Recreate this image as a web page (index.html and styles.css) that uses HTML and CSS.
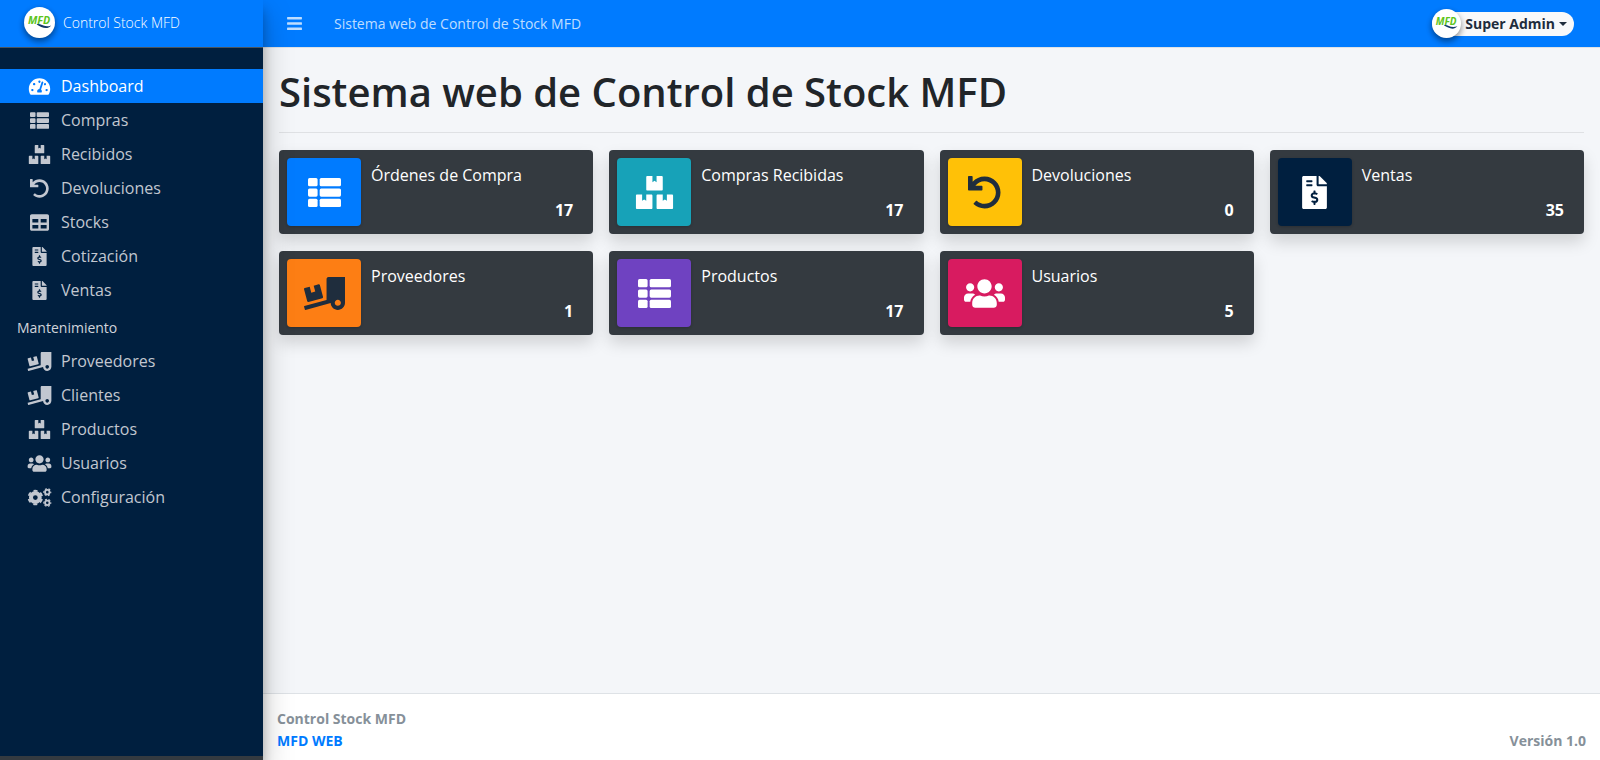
FILE: index.html
```
<!DOCTYPE html>
<html lang="es">
<head>
    <meta charset="UTF-8">
    <meta name="viewport" content="width=device-width, initial-scale=1">
    <title>Sistema web de Control de Stock MFD</title>
    <link rel="stylesheet" href="styles.css">
</head>
<body>
<!-- iconos -->
<svg class="sprite" aria-hidden="true">
    <symbol id="i-dash" viewBox="0 0 576 512"><path d="M288 32C128.94 32 0 160.94 0 320c0 52.8 14.25 102.26 39.06 144.8 5.61 9.62 16.3 15.2 27.44 15.2h443c11.14 0 21.83-5.58 27.44-15.2C561.75 422.26 576 372.8 576 320c0-159.06-128.94-288-288-288zm0 64c14.71 0 26.58 10.13 30.32 23.65-1.11 2.26-2.64 4.23-3.45 6.67l-9.22 27.67c-5.13 3.49-10.97 6.01-17.64 6.01-17.67 0-32-14.33-32-32S270.33 96 288 96zM96 384c-17.67 0-32-14.33-32-32s14.33-32 32-32 32 14.33 32 32-14.33 32-32 32zm48-160c-17.67 0-32-14.33-32-32s14.33-32 32-32 32 14.33 32 32-14.33 32-32 32zm246.77-72.41l-61.33 184C343.13 347.33 352 364.54 352 384c0 11.72-3.38 22.55-8.88 32H232.88c-5.5-9.45-8.88-20.28-8.88-32 0-33.94 26.5-61.43 59.9-63.59l61.34-184.01c4.17-12.56 17.73-19.45 30.36-15.17 12.57 4.19 19.35 17.79 15.17 30.36zm14.66 57.2l15.52-46.55c3.47-1.29 7.13-2.23 11.05-2.23 17.67 0 32 14.33 32 32s-14.33 32-32 32c-11.38-.01-20.89-6.28-26.57-15.22zM480 384c-17.67 0-32-14.33-32-32s14.33-32 32-32 32 14.33 32 32-14.33 32-32 32z"/></symbol>
    <symbol id="i-list" viewBox="0 0 512 512"><rect y="32" width="149" height="128" rx="24"/><rect y="192" width="149" height="128" rx="24"/><rect y="352" width="149" height="128" rx="24"/><rect x="181" y="32" width="331" height="128" rx="24"/><rect x="181" y="192" width="331" height="128" rx="24"/><rect x="181" y="352" width="331" height="128" rx="24"/></symbol>
    <symbol id="i-boxes" viewBox="0 0 576 512"><path d="M560 288h-80v96l-32-21.3-32 21.3v-96h-80c-8.8 0-16 7.2-16 16v192c0 8.8 7.2 16 16 16h224c8.8 0 16-7.2 16-16V304c0-8.8-7.2-16-16-16zm-384-64h224c8.8 0 16-7.2 16-16V16c0-8.8-7.2-16-16-16h-80v96l-32-21.3L256 96V0h-80c-8.8 0-16 7.2-16 16v192c0 8.8 7.2 16 16 16zm64 64h-80v96l-32-21.3L96 384v-96H16c-8.8 0-16 7.2-16 16v192c0 8.8 7.2 16 16 16h224c8.8 0 16-7.2 16-16V304c0-8.8-7.2-16-16-16z"/></symbol>
    <symbol id="i-undo" viewBox="0 0 512 512"><path d="M212.333 224.333H12c-6.627 0-12-5.373-12-12V12C0 5.373 5.373 0 12 0h48c6.627 0 12 5.373 12 12v78.112C117.773 39.279 184.26 7.47 258.175 8.007c136.906.994 246.448 111.623 246.157 248.532C504.041 393.258 393.12 504 256.333 504c-64.089 0-122.496-24.313-166.51-64.215-5.099-4.622-5.334-12.554-.467-17.42l33.967-33.967c4.474-4.474 11.662-4.717 16.401-.525C170.76 415.336 211.58 432 256.333 432c97.268 0 176-78.716 176-176 0-97.267-78.716-176-176-176-58.496 0-110.28 28.476-142.274 72.333h98.274c6.627 0 12 5.373 12 12v48c0 6.627-5.373 12-12 12z"/></symbol>
    <symbol id="i-table" viewBox="0 0 512 512"><path d="M464 32H48C21.49 32 0 53.49 0 80v352c0 26.51 21.49 48 48 48h416c26.51 0 48-21.49 48-48V80c0-26.51-21.49-48-48-48zM224 416H64v-96h160v96zm0-160H64v-96h160v96zm224 160H288v-96h160v96zm0-160H288v-96h160v96z"/></symbol>
    <symbol id="i-file" viewBox="0 0 384 512"><path d="M377 105L279.1 7c-4.5-4.5-10.6-7-17-7H256v128h128v-6.1c0-6.3-2.5-12.4-7-16.9zm-153 31V0H24C10.7 0 0 10.7 0 24v464c0 13.3 10.7 24 24 24h336c13.3 0 24-10.7 24-24V160H248c-13.2 0-24-10.8-24-24zM64 72c0-4.42 3.58-8 8-8h80c4.42 0 8 3.58 8 8v16c0 4.42-3.58 8-8 8H72c-4.42 0-8-3.58-8-8V72zm0 80v-16c0-4.42 3.58-8 8-8h80c4.42 0 8 3.58 8 8v16c0 4.42-3.58 8-8 8H72c-4.42 0-8-3.58-8-8zm144 263.88V440c0 4.42-3.58 8-8 8h-16c-4.42 0-8-3.58-8-8v-24.29c-11.29-.58-22.27-4.52-31.37-11.35-3.9-2.93-4.1-8.77-.57-12.14l11.75-11.21c2.77-2.64 6.89-2.76 10.13-.73 3.87 2.42 8.26 3.72 12.82 3.72h28.11c6.5 0 11.8-5.92 11.8-13.19 0-5.95-3.61-11.19-8.77-12.73l-45-13.5c-18.59-5.58-31.58-23.42-31.58-43.39 0-24.52 19.05-44.44 42.67-45.07V232c0-4.42 3.58-8 8-8h16c4.42 0 8 3.58 8 8v24.29c11.29.58 22.27 4.51 31.37 11.35 3.9 2.93 4.1 8.77.57 12.14l-11.75 11.21c-2.77 2.64-6.89 2.76-10.13.73-3.87-2.43-8.26-3.72-12.82-3.72h-28.11c-6.5 0-11.8 5.92-11.8 13.19 0 5.95 3.61 11.19 8.77 12.73l45 13.5c18.59 5.58 31.58 23.42 31.58 43.39 0 24.53-19.05 44.44-42.67 45.07z"/></symbol>
    <symbol id="i-truck" viewBox="0 0 640 512"><path d="M50.2 375.6c2.3 8.5 11.1 13.6 19.6 11.3l216.4-58c8.5-2.3 13.6-11.1 11.3-19.6l-49.7-185.5c-2.3-8.5-11.1-13.6-19.6-11.3L151 133.3l24.8 92.7-61.8 16.5-24.8-92.7-77.3 20.7C3.4 172.8-1.7 181.6.6 190.1l49.6 185.5zM384 0c-17.7 0-32 14.3-32 32v323.6L5.9 450c-4.3 1.2-6.8 5.6-5.6 9.8l12.6 46.3c1.2 4.3 5.6 6.8 9.8 5.6l393.7-107.4C418.8 464.1 467.6 512 528 512c61.9 0 112-50.1 112-112V0H384zm144 448c-26.5 0-48-21.5-48-48s21.5-48 48-48 48 21.5 48 48-21.5 48-48 48z"/></symbol>
    <symbol id="i-users" viewBox="0 0 640 512"><path d="M96 224c35.3 0 64-28.7 64-64s-28.7-64-64-64-64 28.7-64 64 28.7 64 64 64zm448 0c35.3 0 64-28.7 64-64s-28.7-64-64-64-64 28.7-64 64 28.7 64 64 64zm32 32h-64c-17.6 0-33.5 7.1-45.1 18.6 40.3 22.1 68.9 62 75.1 109.4h66c17.7 0 32-14.3 32-32v-32c0-35.3-28.7-64-64-64zm-256 0c61.9 0 112-50.1 112-112S381.9 32 320 32 208 82.1 208 144s50.1 112 112 112zm76.8 32h-8.3c-20.8 10-43.9 16-68.5 16s-47.6-6-68.5-16h-8.3C179.6 288 128 339.6 128 403.2V432c0 26.5 21.5 48 48 48h288c26.5 0 48-21.5 48-48v-28.8c0-63.6-51.6-115.2-115.2-115.2zm-223.7-13.4C161.5 263.1 145.6 256 128 256H64c-35.3 0-64 28.7-64 64v32c0 17.7 14.3 32 32 32h65.9c6.3-47.4 34.9-87.3 75.2-109.4z"/></symbol>
    <symbol id="i-cogs" viewBox="0 0 640 512">
        <g fill="none" stroke="currentColor">
            <circle cx="208" cy="256" r="118" stroke-width="108"/>
            <circle cx="208" cy="256" r="184" stroke-width="48" pathLength="12" stroke-dasharray="1.1 .9" stroke-dashoffset="-.45"/>
            <circle cx="530" cy="112" r="60" stroke-width="50"/>
            <circle cx="530" cy="112" r="94" stroke-width="30" pathLength="12" stroke-dasharray="1.1 .9" stroke-dashoffset=".55"/>
            <circle cx="530" cy="400" r="60" stroke-width="50"/>
            <circle cx="530" cy="400" r="94" stroke-width="30" pathLength="12" stroke-dasharray="1.1 .9" stroke-dashoffset=".55"/>
        </g>
    </symbol>
    <symbol id="i-bars" viewBox="0 0 448 512"><rect y="60" width="448" height="72" rx="16"/><rect y="220" width="448" height="72" rx="16"/><rect y="380" width="448" height="72" rx="16"/></symbol>
    <symbol id="i-logo" viewBox="0 0 32 32">
        <text x="4" y="18" class="logo-text">MFD</text>
        <path d="M13 18C17 16 20 22 28 19C24 24 18 21 13 18Z" fill="#123a6b"/>
    </symbol>
</svg>

<div class="wrapper">
    <aside class="sidebar">
        <a href="#" class="brand">
            <svg class="logo" aria-hidden="true"><use href="#i-logo"/></svg>
            <span>Control Stock MFD</span>
        </a>
        <nav class="menu">
            <ul>
                <li><a href="#" class="active"><svg class="icon"><use href="#i-dash"/></svg>Dashboard</a></li>
                <li><a href="#"><svg class="icon"><use href="#i-list"/></svg>Compras</a></li>
                <li><a href="#"><svg class="icon"><use href="#i-boxes"/></svg>Recibidos</a></li>
                <li><a href="#"><svg class="icon"><use href="#i-undo"/></svg>Devoluciones</a></li>
                <li><a href="#"><svg class="icon"><use href="#i-table"/></svg>Stocks</a></li>
                <li><a href="#"><svg class="icon"><use href="#i-file"/></svg>Cotización</a></li>
                <li><a href="#"><svg class="icon"><use href="#i-file"/></svg>Ventas</a></li>
                <li class="menu-header">Mantenimiento</li>
                <li><a href="#"><svg class="icon"><use href="#i-truck"/></svg>Proveedores</a></li>
                <li><a href="#"><svg class="icon"><use href="#i-truck"/></svg>Clientes</a></li>
                <li><a href="#"><svg class="icon"><use href="#i-boxes"/></svg>Productos</a></li>
                <li><a href="#"><svg class="icon"><use href="#i-users"/></svg>Usuarios</a></li>
                <li><a href="#"><svg class="icon"><use href="#i-cogs"/></svg>Configuración</a></li>
            </ul>
        </nav>
    </aside>

    <div class="page">
        <header class="topbar">
            <button type="button" class="toggle" aria-label="Menú"><svg><use href="#i-bars"/></svg></button>
            <a href="#" class="topbar-title">Sistema web de Control de Stock MFD</a>
            <button type="button" class="user">
                <svg class="logo" aria-hidden="true"><use href="#i-logo"/></svg>
                <span>Super Admin</span>
                <i class="caret"></i>
            </button>
        </header>

        <main class="content">
            <h1>Sistema web de Control de Stock MFD</h1>
            <div class="cards">
                <div class="card">
                    <div class="card-icon blue"><svg><use href="#i-list"/></svg></div>
                    <div class="card-body"><span>Órdenes de Compra</span><strong>17</strong></div>
                </div>
                <div class="card">
                    <div class="card-icon teal"><svg><use href="#i-boxes"/></svg></div>
                    <div class="card-body"><span>Compras Recibidas</span><strong>17</strong></div>
                </div>
                <div class="card">
                    <div class="card-icon yellow"><svg><use href="#i-undo"/></svg></div>
                    <div class="card-body"><span>Devoluciones</span><strong>0</strong></div>
                </div>
                <div class="card">
                    <div class="card-icon navy"><svg><use href="#i-file"/></svg></div>
                    <div class="card-body"><span>Ventas</span><strong>35</strong></div>
                </div>
                <div class="card">
                    <div class="card-icon orange"><svg><use href="#i-truck"/></svg></div>
                    <div class="card-body"><span>Proveedores</span><strong>1</strong></div>
                </div>
                <div class="card">
                    <div class="card-icon purple"><svg><use href="#i-list"/></svg></div>
                    <div class="card-body"><span>Productos</span><strong>17</strong></div>
                </div>
                <div class="card">
                    <div class="card-icon pink"><svg><use href="#i-users"/></svg></div>
                    <div class="card-body"><span>Usuarios</span><strong>5</strong></div>
                </div>
            </div>
        </main>

        <footer class="footer">
            <div>Control Stock MFD<br><a href="#">MFD WEB</a></div>
            <div>Versión 1.0</div>
        </footer>
    </div>
</div>
</body>
</html>
```
FILE: styles.css
```
*{
    margin: 0;
    padding: 0;
    box-sizing: border-box;
    list-style: none;
}
body{
    font-family: "Open Sans", "Noto Sans", sans-serif;
    font-size: 16px;
    line-height: 24px;
    color: #212529;
    background: #f4f6f9;
}
a{
    text-decoration: none;
}
button{
    font: inherit;
    border: none;
    cursor: pointer;
}
svg{
    fill: currentColor;
}
.sprite{
    display: none;
}
.wrapper{
    display: flex;
    min-height: 100vh;
}

/* barra lateral */
.sidebar{
    position: relative;
    z-index: 2;
    flex: none;
    width: 263px;
    background: #001f3f;
    border-bottom: 4px solid #343a40;
    box-shadow: 0 14px 28px rgba(0,0,0,.25), 0 10px 10px rgba(0,0,0,.22);
}
.brand{
    display: flex;
    align-items: center;
    gap: 8px;
    height: 48px;
    padding: 0 24px 2px;
    background: #007bff;
    border-bottom: 1px solid #4b545c;
    color: #fff;
    font-size: 14px;
    font-weight: 300;
}
.logo{
    flex: none;
    width: 31px;
    height: 31px;
    border-radius: 50%;
    background: #fff;
    box-shadow: 0 3px 6px rgba(0,0,0,.3), 0 3px 6px rgba(0,0,0,.2);
}
.logo-text{
    font: italic 700 11px "Open Sans", sans-serif;
    fill: #5cc420;
}
.menu{
    padding-top: 21px;
}
.menu a{
    display: flex;
    align-items: center;
    height: 34px;
    padding: 0 27px;
    gap: 9px;
    color: #c2c7d0;
}
.menu a.active{
    background: #007bff;
    color: #fff;
}
.icon{
    width: 25px;
    height: 19px;
}
.menu-header{
    padding: 9px 17px 4px;
    font-size: 14px;
    color: #d0d4db;
}

/* cabecera */
.page{
    flex: 1;
    min-width: 0;
    display: flex;
    flex-direction: column;
}
.topbar{
    display: flex;
    align-items: center;
    height: 48px;
    padding: 0 26px 0 24px;
    background: #007bff;
    border-bottom: 1px solid #dee2e6;
}
.toggle{
    width: 15px;
    height: 17px;
    background: none;
    color: rgba(255,255,255,.75);
}
.toggle svg{
    display: block;
    width: 15px;
    height: 17px;
}
.topbar-title{
    margin-left: 32px;
    font-size: 14px;
    color: rgba(255,255,255,.75);
}
.user{
    display: flex;
    align-items: center;
    height: 24px;
    margin-left: auto;
    padding-right: 7px;
    border-radius: 12px;
    background: #f8f9fa;
    color: #1f2d3d;
    font-size: 14px;
    font-weight: 700;
}
.user .logo{
    width: 29px;
    height: 29px;
    margin-right: 4px;
}
.caret{
    margin-left: 4px;
    border: 4px solid transparent;
    border-top-color: currentColor;
    border-bottom: none;
}

/* contenido */
.content{
    flex: 1;
    padding: 16px;
}
h1{
    padding-bottom: 12px;
    margin-bottom: 17px;
    border-bottom: 1px solid #dfe1e4;
    font-size: 40px;
    line-height: 56px;
    font-weight: 600;
}
.cards{
    display: grid;
    grid-template-columns: repeat(4, 1fr);
    gap: 17px 16px;
}
.card{
    display: flex;
    height: 84px;
    padding: 8px;
    border-radius: 4px;
    background: #343a40;
    color: #fff;
    box-shadow: 0 8px 16px rgba(0,0,0,.15);
}
.card-icon{
    flex: none;
    display: flex;
    align-items: center;
    justify-content: center;
    width: 74px;
    border-radius: 4px;
    box-shadow: 0 1px 3px rgba(0,0,0,.2);
}
.card-icon svg{
    width: 41px;
    height: 33px;
}
.card-body{
    flex: 1;
    display: flex;
    flex-direction: column;
    justify-content: space-between;
    padding: 5px 12px 4px 10px;
}
.card-body strong{
    align-self: flex-end;
}
.blue{ background: #007bff; }
.teal{ background: #17a2b8; }
.yellow{ background: #ffc107; color: #1f2d3d; }
.navy{ background: #001f3f; }
.orange{ background: #fd7e14; color: #1f2d3d; }
.purple{ background: #6f42c1; }
.pink{ background: #d81b60; }

/* pie */
.footer{
    display: flex;
    justify-content: space-between;
    align-items: flex-end;
    padding: 14px 14px 8px;
    border-top: 1px solid #dee2e6;
    background: #fff;
    color: #869099;
    font-size: 14px;
    line-height: 22px;
    font-weight: 700;
}
.footer a{
    color: #007bff;
}
```
